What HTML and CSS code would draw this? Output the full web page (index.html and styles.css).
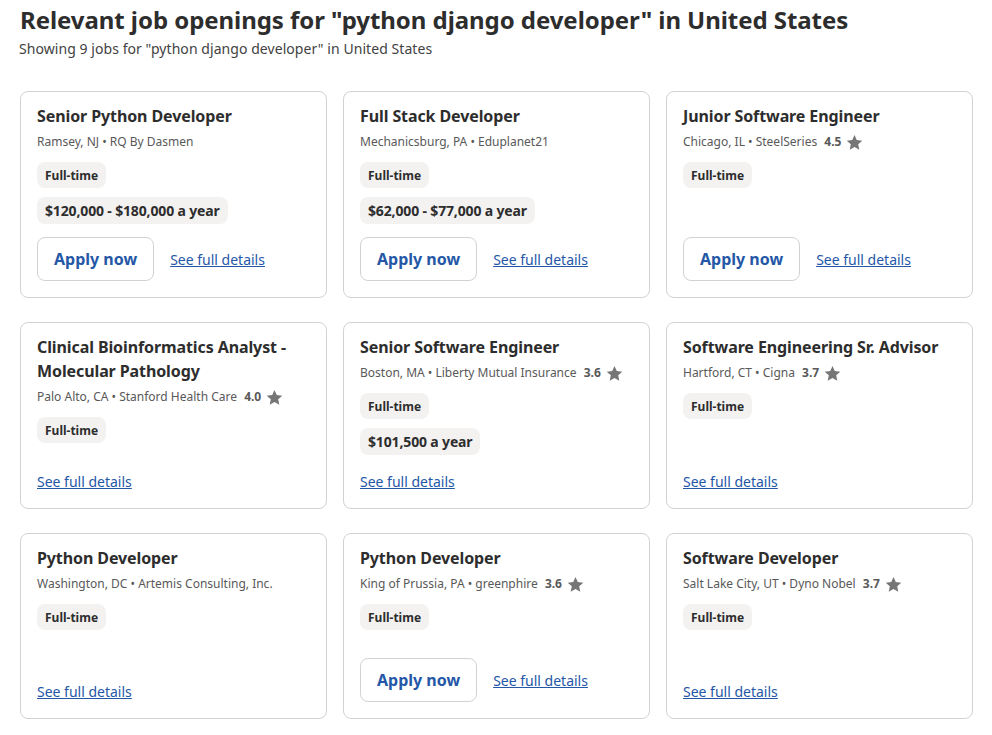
FILE: index.html
```html
<!DOCTYPE html>
<html lang="en">

<head>
    <meta charset="UTF-8">
    <meta name="viewport" content="width=device-width, initial-scale=1.0">
    <title>Job openings</title>

    <link rel="stylesheet" href="styles.css">

</head>

<body>
    <main>
        <h1>Relevant job openings for "python django developer" in United States</h1>
        <p class="subtitle">Showing 9 jobs for "python django developer" in United States</p>

        <div class="jobs">
            <div class="job">
                <h2>Senior Python Developer</h2>
                <p class="meta">Ramsey, NJ • RQ By Dasmen</p>
                <span class="chip">Full-time</span>
                <span class="chip salary">$120,000 - $180,000 a year</span>
                <div class="actions">
                    <a class="apply" href="#">Apply now</a>
                    <a class="details" href="#">See full details</a>
                </div>
            </div>

            <div class="job">
                <h2>Full Stack Developer</h2>
                <p class="meta">Mechanicsburg, PA • Eduplanet21</p>
                <span class="chip">Full-time</span>
                <span class="chip salary">$62,000 - $77,000 a year</span>
                <div class="actions">
                    <a class="apply" href="#">Apply now</a>
                    <a class="details" href="#">See full details</a>
                </div>
            </div>

            <div class="job">
                <h2>Junior Software Engineer</h2>
                <p class="meta">Chicago, IL • SteelSeries <span class="rating">4.5</span>
                    <svg class="star" viewBox="0 0 24 24"><path d="M12 1.5l3.2 7.1 7.8.8-5.8 5.2 1.6 7.7-6.8-3.9-6.8 3.9 1.6-7.7L1 9.4l7.8-.8z"/></svg></p>
                <span class="chip">Full-time</span>
                <div class="actions">
                    <a class="apply" href="#">Apply now</a>
                    <a class="details" href="#">See full details</a>
                </div>
            </div>

            <div class="job">
                <h2>Clinical Bioinformatics Analyst - Molecular Pathology</h2>
                <p class="meta">Palo Alto, CA • Stanford Health Care <span class="rating">4.0</span>
                    <svg class="star" viewBox="0 0 24 24"><path d="M12 1.5l3.2 7.1 7.8.8-5.8 5.2 1.6 7.7-6.8-3.9-6.8 3.9 1.6-7.7L1 9.4l7.8-.8z"/></svg></p>
                <span class="chip">Full-time</span>
                <div class="actions">
                    <a class="details" href="#">See full details</a>
                </div>
            </div>

            <div class="job">
                <h2>Senior Software Engineer</h2>
                <p class="meta">Boston, MA • Liberty Mutual Insurance <span class="rating">3.6</span>
                    <svg class="star" viewBox="0 0 24 24"><path d="M12 1.5l3.2 7.1 7.8.8-5.8 5.2 1.6 7.7-6.8-3.9-6.8 3.9 1.6-7.7L1 9.4l7.8-.8z"/></svg></p>
                <span class="chip">Full-time</span>
                <span class="chip salary">$101,500 a year</span>
                <div class="actions">
                    <a class="details" href="#">See full details</a>
                </div>
            </div>

            <div class="job">
                <h2>Software Engineering Sr. Advisor</h2>
                <p class="meta">Hartford, CT • Cigna <span class="rating">3.7</span>
                    <svg class="star" viewBox="0 0 24 24"><path d="M12 1.5l3.2 7.1 7.8.8-5.8 5.2 1.6 7.7-6.8-3.9-6.8 3.9 1.6-7.7L1 9.4l7.8-.8z"/></svg></p>
                <span class="chip">Full-time</span>
                <div class="actions">
                    <a class="details" href="#">See full details</a>
                </div>
            </div>

            <div class="job">
                <h2>Python Developer</h2>
                <p class="meta">Washington, DC • Artemis Consulting, Inc.</p>
                <span class="chip">Full-time</span>
                <div class="actions">
                    <a class="details" href="#">See full details</a>
                </div>
            </div>

            <div class="job">
                <h2>Python Developer</h2>
                <p class="meta">King of Prussia, PA • greenphire <span class="rating">3.6</span>
                    <svg class="star" viewBox="0 0 24 24"><path d="M12 1.5l3.2 7.1 7.8.8-5.8 5.2 1.6 7.7-6.8-3.9-6.8 3.9 1.6-7.7L1 9.4l7.8-.8z"/></svg></p>
                <span class="chip">Full-time</span>
                <div class="actions">
                    <a class="apply" href="#">Apply now</a>
                    <a class="details" href="#">See full details</a>
                </div>
            </div>

            <div class="job">
                <h2>Software Developer</h2>
                <p class="meta">Salt Lake City, UT • Dyno Nobel <span class="rating">3.7</span>
                    <svg class="star" viewBox="0 0 24 24"><path d="M12 1.5l3.2 7.1 7.8.8-5.8 5.2 1.6 7.7-6.8-3.9-6.8 3.9 1.6-7.7L1 9.4l7.8-.8z"/></svg></p>
                <span class="chip">Full-time</span>
                <div class="actions">
                    <a class="details" href="#">See full details</a>
                </div>
            </div>
        </div>
    </main>
</body>

</html>
```

FILE: styles.css
```css
* {
    margin: 0;
    padding: 0;
    box-sizing: border-box;
}

:root {
    --text-color: #2d2d2d;
    --muted-color: #595959;
    --border-color: #d4d2d0;
    --chip-color: #f3f2f1;
    --link-color: #2557a7;
}

body {
    background-color: #fff;
    color: var(--text-color);
    font-family: "Noto Sans", sans-serif;
}

main {
    padding: 3px 19px 0 20px;
}

h1 {
    font-size: 24px;
    line-height: 34px;
    font-weight: 700;
    letter-spacing: -0.06px;
}

.subtitle {
    font-size: 14px;
    line-height: 20px;
    margin-top: 2px;
    margin-left: -1px;
    color: #424242;
    letter-spacing: 0.06px;
}

.jobs {
    display: grid;
    grid-template-columns: repeat(3, 307px);
    gap: 24px 16px;
    margin-top: 32px;
}

.job {
    display: flex;
    flex-direction: column;
    align-items: flex-start;
    border: 1px solid var(--border-color);
    border-radius: 8px;
    padding: 12px 16px 16px;
}

h2 {
    font-size: 16px;
    line-height: 24px;
    font-weight: 700;
    letter-spacing: -0.1px;
}

.meta {
    display: flex;
    align-items: center;
    font-size: 12px;
    line-height: 18px;
    margin-top: 5px;
    color: var(--muted-color);
    white-space: pre-wrap;
}

.rating {
    font-weight: 700;
    margin-left: 4px;
}

.star {
    width: 17px;
    height: 17px;
    margin-left: 5px;
    fill: #767676;
}

.chip {
    background-color: var(--chip-color);
    border-radius: 8px;
    font-size: 12px;
    line-height: 18px;
    font-weight: 700;
    padding: 5px 8px 3px;
    margin-top: 11px;
}

.salary {
    font-size: 14px;
    line-height: 19px;
    padding: 4px 8px;
    margin-top: 9px;
    letter-spacing: -0.15px;
}

.actions {
    display: flex;
    align-items: center;
    gap: 16px;
    margin-top: auto;
    padding-top: 28px;
}

.salary + .actions {
    padding-top: 13px;
}

.apply {
    display: block;
    border: 1px solid var(--border-color);
    border-radius: 8px;
    padding: 10px 16px;
    font-size: 16px;
    line-height: 22px;
    font-weight: 700;
    color: var(--link-color);
    text-decoration: none;
}

.details {
    font-size: 14px;
    line-height: 21px;
    color: var(--link-color);
}
```
